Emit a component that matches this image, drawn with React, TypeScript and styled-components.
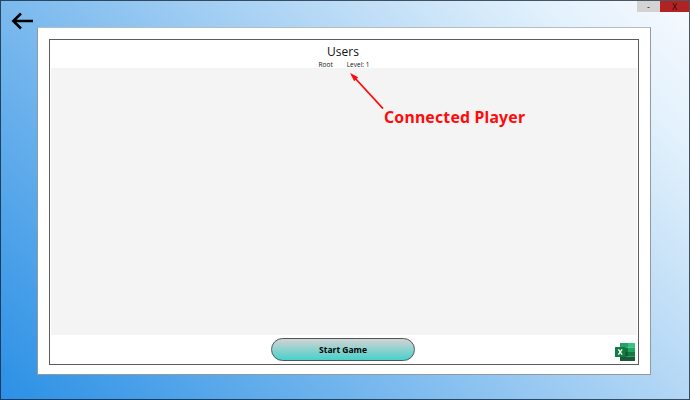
import React from "react";
import styled, { createGlobalStyle } from "styled-components";

const GlobalStyle = createGlobalStyle`
  body { margin: 0; overflow: hidden; }
  * { box-sizing: border-box; }
`;

const Window = styled.div`
  position: relative;
  width: 690px;
  height: 400px;
  padding: 26px 38px 24px 36px;
  border: 1px solid rgba(8, 24, 42, 0.72);
  background: linear-gradient(45deg, #2b90e5, #b3d7f5 63%, #e2f1fc 86%, #f8f9ff) border-box;
  font-family: "Open Sans", "Noto Sans", sans-serif;
  color: #111;
`;

const WindowControls = styled.div`
  position: absolute;
  top: 0;
  right: 0;
  display: flex;
`;

const ControlButton = styled.button<{ $close?: boolean }>`
  width: ${(p) => (p.$close ? 29 : 23)}px;
  height: 11px;
  padding: 0;
  border: 0;
  background: ${(p) => (p.$close ? "#b22222" : "#d3d3d3")};
  color: #1a1010;
  font: 9px/11px "Open Sans", sans-serif;
`;

const BackButton = styled.button`
  position: absolute;
  top: 11px;
  left: 10px;
  width: 23px;
  height: 18px;
  padding: 0;
  border: 0;
  background: none;
  svg { display: block; }
`;

const Card = styled.main`
  height: 348px;
  padding: 11px 11px 10px;
  border: 1px solid #929a9f;
  border-top-color: #b4bdc3;
  background: #fff;
`;

const Panel = styled.section`
  display: flex;
  flex-direction: column;
  height: 326px;
  border: 1px solid #5c5c5c;
`;

const Header = styled.header`
  height: 28px;
  flex: none;
  text-align: center;
`;

const Title = styled.h1`
  margin: 0;
  padding: 4px 2px 0 0;
  font-size: 12px;
  font-weight: 400;
  line-height: 16px;
`;

const PlayerRow = styled.div`
  display: flex;
  justify-content: center;
  gap: 14px;
  padding-top: 1px;
  font-size: 6.5px;
  line-height: 8px;
`;

const PlayerList = styled.div`
  position: relative;
  flex: 1;
  margin: 0 1px;
  background: #f4f4f4;
`;

const Annotation = styled.div`
  position: absolute;
  left: 299px;
  top: 5px;
  svg { display: block; }
`;

const AnnotationLabel = styled.div`
  margin: -2px 0 0 34px;
  color: #ff0a0a;
  font-family: "Noto Sans", sans-serif;
  font-size: 15.8px;
  font-weight: 700;
  letter-spacing: 0.2px;
  line-height: 20px;
  white-space: nowrap;
`;

const Footer = styled.footer`
  display: grid;
  grid-template-columns: 221px 144px 1fr;
  height: 29px;
  flex: none;
  padding: 3px 3px 3px 0;
`;

const StartButton = styled.button`
  grid-column: 2;
  height: 23px;
  padding: 0;
  border: 1px solid #4c5858;
  border-radius: 12px;
  background: linear-gradient(#d3d3d3, #48d1cc);
  color: #000;
  font: 700 8.5px/21px "Open Sans", sans-serif;
`;

const ExportButton = styled.button`
  justify-self: end;
  align-self: end;
  height: 18px;
  padding: 0;
  border: 0;
  background: none;
  svg { display: block; }
`;

const ArrowLeft = () => (
  <svg width="23" height="18" viewBox="0 0 23 18" fill="none" stroke="#000" strokeWidth="2.5">
    <path d="M22 9H2M10 1.5L2.3 9L10 16.5" />
  </svg>
);

const PointerArrow = () => (
  <svg width="34" height="36" viewBox="0 0 34 36">
    <path d="M4 4L33 35.5" stroke="#ff0a0a" strokeWidth="1.8" />
    <path d="M0 0L8.2 4.3L4.2 8.2Z" fill="#ff0a0a" />
  </svg>
);

const ExcelIcon = () => (
  <svg width="20" height="18" viewBox="0 0 20 18">
    <path d="M5 0h8v4.5H5Z" fill="#21a366" />
    <path d="M13 0h6.5q.5 0 .5.5v4h-7Z" fill="#33c481" />
    <path d="M5 4.5h8V9H5Z" fill="#107c41" />
    <path d="M13 4.5h7V9h-7Z" fill="#21a366" />
    <path d="M5 9h8v4.5H5Z" fill="#185c37" />
    <path d="M13 9h7v4.5h-7Z" fill="#107c41" />
    <path d="M5 13.5h15v4q0 .5-.5.5H5Z" fill="#185c37" />
    <rect x="5" y="5" width="6.5" height="10" fill="#0b4f2b" opacity="0.5" />
    <rect y="4" width="10.5" height="10" rx="0.6" fill="#107c41" />
    <path d="M3.4 6.3L7.1 11.7M7.1 6.3L3.4 11.7" stroke="#fff" strokeWidth="1.4" />
  </svg>
);

export default function App() {
  return (
    <>
      <GlobalStyle />
      <Window>
        <BackButton aria-label="Back"><ArrowLeft /></BackButton>
        <WindowControls>
          <ControlButton>-</ControlButton>
          <ControlButton $close>X</ControlButton>
        </WindowControls>
        <Card>
          <Panel>
            <Header>
              <Title>Users</Title>
              <PlayerRow>
                <span>Root</span>
                <span>Level: 1</span>
              </PlayerRow>
            </Header>
            <PlayerList>
              <Annotation>
                <PointerArrow />
                <AnnotationLabel>Connected Player</AnnotationLabel>
              </Annotation>
            </PlayerList>
            <Footer>
              <StartButton>Start Game</StartButton>
              <ExportButton aria-label="Export to Excel"><ExcelIcon /></ExportButton>
            </Footer>
          </Panel>
        </Card>
      </Window>
    </>
  );
}
